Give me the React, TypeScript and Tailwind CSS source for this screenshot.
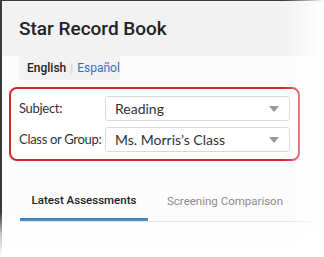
import React from "react";

const Caret: React.FC = () => (
  <svg width="10" height="6" viewBox="0 0 10 6" className="shrink-0">
    <path d="M0 0 L10 0 L5 6 Z" fill="#9a9a9a" />
  </svg>
);

const SelectBox: React.FC<{ value: string }> = ({ value }) => (
  <div className="flex h-[25px] w-[185px] shrink-0 items-center justify-between rounded-[3px] border border-[#d9d9d9] bg-white pl-[9px] pr-[10px]">
    <span className="whitespace-nowrap text-[14px] text-[#333]">{value}</span>
    <Caret />
  </div>
);

export default function App() {
  return (
    <div className="relative h-[257px] w-[324px] overflow-hidden bg-white">
      <div className="flex h-full flex-col border-l-2 border-t border-[#3a3a3a] bg-[#fcfcfc]">
        {/* Header */}
        <div className="flex h-[55px] shrink-0 items-center bg-[#f2f2f2] pl-[17px]">
          <h1
            className="pt-[2px] text-[19px] font-medium text-[#222]"
            style={{ fontFamily: "Roboto, sans-serif" }}
          >
            Star Record Book
          </h1>
        </div>

        {/* Language switch */}
        <div
          className="ml-[17px] flex h-[24px] w-[101px] shrink-0 items-center gap-[4px] rounded-b-[4px] bg-[#f2f2f2] pl-[8px] text-[12px]"
          style={{ fontFamily: "Roboto, sans-serif" }}
        >
          <span className="font-medium text-[#222]">English</span>
          <span className="text-[#d0d0d0]">|</span>
          <span className="text-[#2f72c0]">Español</span>
        </div>

        {/* Highlighted filters */}
        <div
          className="ml-[7px] mt-[7px] flex w-[291px] shrink-0 flex-col gap-[6px] rounded-[8px] border-2 border-[#d6262d] bg-white py-[7px] pl-[8px]"
          style={{ fontFamily: "Lato, 'Noto Sans', sans-serif" }}
        >
          <div className="flex items-center">
            <span className="w-[86px] shrink-0 whitespace-nowrap text-[13px] tracking-[-0.3px] text-[#333]">
              Subject:
            </span>
            <SelectBox value="Reading" />
          </div>
          <div className="flex items-center">
            <span className="w-[86px] shrink-0 whitespace-nowrap text-[13px] tracking-[-0.3px] text-[#333]">
              Class or Group:
            </span>
            <SelectBox value="Ms. Morris’s Class" />
          </div>
        </div>

        {/* Tabs */}
        <div
          className="ml-[18px] mt-[24px] flex w-[292px] shrink-0 border-b border-[#d8d8d8] text-[11.5px]"
          style={{ fontFamily: "Roboto, sans-serif" }}
        >
          <div className="flex h-[36px] w-[128px] items-center justify-center border-b-[3px] border-[#1565ad] pb-[2px] font-medium text-[#222]">
            Latest Assessments
          </div>
          <div className="flex h-[36px] items-center pb-[2px] pl-[19px] text-[#8a8a8a]">
            Screening Comparison
          </div>
        </div>

        {/* Faded next section */}
        <div
          className="ml-[26px] mt-[10px] flex shrink-0 items-center gap-[6px] text-[15px] font-medium text-[#eef2f8]"
          style={{ fontFamily: "Roboto, sans-serif" }}
        >
          <span className="h-[12px] w-[12px] rounded-[2px] border border-[#eef2f8]" />
          Star Enterprise Goals
        </div>
      </div>

      {/* right and bottom fade-out */}
      <div className="pointer-events-none absolute inset-y-0 right-0 w-[40px] bg-gradient-to-r from-transparent to-white" />
      <div className="pointer-events-none absolute inset-x-0 bottom-0 h-[45px] bg-gradient-to-b from-transparent via-white/70 to-white" />
    </div>
  );
}
